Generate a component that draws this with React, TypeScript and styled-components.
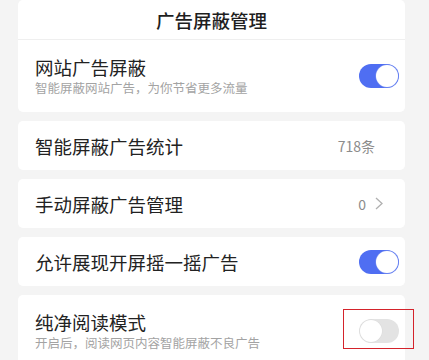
import React from "react";
import styled, { createGlobalStyle } from "styled-components";

const GlobalStyle = createGlobalStyle`
  body {
    margin: 0;
    background: #f4f4f4;
    font-family: "Noto Sans CJK SC", "Noto Sans", sans-serif;
  }
`;

const Page = styled.div`
  display: flex;
  flex-direction: column;
  gap: 9px;
  padding: 0 24px 0 18px;
`;

const Card = styled.div`
  background: #ffffff;
  border-radius: 5px;
`;

const Header = styled.div`
  height: 39px;
  border-bottom: 1px solid #efefef;
  display: flex;
  align-items: center;
  justify-content: center;
  font-size: 18.5px;
  font-weight: 500;
  color: #1e1e1e;
`;

const Row = styled.div<{ $tall?: boolean }>`
  height: ${(p) => (p.$tall ? 72 : 49)}px;
  display: flex;
  align-items: center;
  justify-content: space-between;
  padding: 0 6px 0 17px;
`;

const TextBlock = styled.div`
  display: flex;
  flex-direction: column;
  gap: 2px;
`;

const Title = styled.div`
  font-size: 18.5px;
  line-height: 22px;
  color: #222222;
`;

const Sub = styled.div`
  font-size: 12.5px;
  line-height: 16px;
  color: #a3a3a3;
`;

const Value = styled.div<{ $mr: number }>`
  display: flex;
  align-items: center;
  gap: 9px;
  margin-right: ${(p) => p.$mr}px;
  font-size: 14px;
  color: #8c8c8c;
`;

const ToggleWrap = styled.div`
  position: relative;
`;

const Toggle = styled.div<{ $on: boolean }>`
  width: 40px;
  height: 24px;
  border-radius: 12px;
  background: ${(p) => (p.$on ? "#4f6ef2" : "#e3e3e3")};
  display: flex;
  align-items: center;
  justify-content: ${(p) => (p.$on ? "flex-end" : "flex-start")};
  padding: 0 1px;
  box-sizing: border-box;
`;

const Knob = styled.div<{ $on: boolean }>`
  width: 22px;
  height: 22px;
  border-radius: 50%;
  background: #ffffff;
  box-shadow: ${(p) => (p.$on ? "0 0 0 0.5px #7d93f0" : "0 0 0 0.5px #dadada")};
`;

const Mark = styled.div`
  position: absolute;
  left: -16px;
  top: -10px;
  width: 71px;
  height: 40px;
  border: 1px solid #d4232b;
  box-sizing: border-box;
`;

const Chevron = () => (
  <svg width="8" height="13" viewBox="0 0 8 13">
    <path d="M1 1l6 5.5L1 12" fill="none" stroke="#b0b0b0" strokeWidth="1.3" />
  </svg>
);

const Switch: React.FC<{ on: boolean; marked?: boolean }> = ({ on, marked }) => (
  <ToggleWrap>
    <Toggle $on={on}>
      <Knob $on={on} />
    </Toggle>
    {marked && <Mark />}
  </ToggleWrap>
);

export default function App() {
  return (
    <>
      <GlobalStyle />
      <Page>
        <Card>
          <Header>广告屏蔽管理</Header>
          <Row $tall>
            <TextBlock>
              <Title>网站广告屏蔽</Title>
              <Sub>智能屏蔽网站广告，为你节省更多流量</Sub>
            </TextBlock>
            <Switch on />
          </Row>
        </Card>
        <Card>
          <Row>
            <Title>智能屏蔽广告统计</Title>
            <Value $mr={24}>718条</Value>
          </Row>
        </Card>
        <Card>
          <Row>
            <Title>手动屏蔽广告管理</Title>
            <Value $mr={16}>
              0
              <Chevron />
            </Value>
          </Row>
        </Card>
        <Card>
          <Row>
            <Title>允许展现开屏摇一摇广告</Title>
            <Switch on />
          </Row>
        </Card>
        <Card>
          <Row $tall>
            <TextBlock>
              <Title>纯净阅读模式</Title>
              <Sub>开启后，阅读网页内容智能屏蔽不良广告</Sub>
            </TextBlock>
            <Switch on={false} marked />
          </Row>
        </Card>
      </Page>
    </>
  );
}
